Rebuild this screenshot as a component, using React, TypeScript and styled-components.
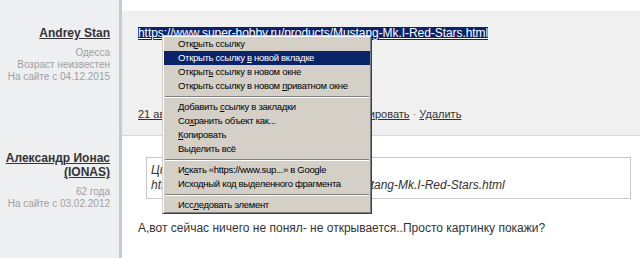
import React from "react";
import styled, { createGlobalStyle, css } from "styled-components";

const Global = createGlobalStyle`
  html, body { margin: 0; padding: 0; background: #fff; }
  body { font-family: "Liberation Sans", Arial, sans-serif; color: #333; }
`;

const Page = styled.div`
  position: relative;
  width: 640px;
  height: 258px;
  overflow: hidden;
`;

const Row = styled.div<{ $h?: number }>`
  display: grid;
  grid-template-columns: 119px 1fr;
  ${(p) => p.$h !== undefined && css`height: ${p.$h}px;`}
`;

const UserCell = styled.div`
  background: #edeff1;
  text-align: right;
  padding: 15px 9px 0 0;
`;

const ContentCell = styled.div<{ $grey?: boolean; $line?: boolean }>`
  border-left: 3px solid #c9cacc;
  background: ${(p) => (p.$grey ? "#f0f0f0" : "#fff")};
  ${(p) => p.$line && css`border-bottom: 1px solid #d6d6d6;`}
  padding: 0 9px 0 16px;
  display: flex;
  flex-direction: column;
`;

const UserName = styled.a`
  display: block;
  font-size: 12px;
  line-height: 14px;
  font-weight: bold;
  color: #333;
  text-decoration: underline;
  margin-bottom: 7px;
`;

const UserInfo = styled.div`
  font-size: 10px;
  line-height: 12px;
  color: #a0a0a0;
  white-space: nowrap;
`;

const SelectedLink = styled.a`
  align-self: flex-start;
  margin-top: 16px;
  font-size: 12px;
  line-height: 13px;
  letter-spacing: -0.06px;
  color: #fff;
  background: #0a246a;
  text-decoration: underline;
`;

const Meta = styled.div`
  margin-top: 67px;
  font-size: 11px;
  line-height: 14px;
  color: #888;
  height: 28px;
`;

const MetaLink = styled.a`
  color: #333;
  text-decoration: underline;
`;

const Quote = styled.div`
  margin: 21px 0 0 8px;
  border: 1px solid #c8c8c8;
  padding: 5px 4px 5px;
  font-size: 12px;
  line-height: 15px;
  font-style: italic;
  color: #333;
`;

const Text = styled.p`
  margin: 22px 0 0;
  font-size: 12px;
  line-height: 15px;
  color: #333;
`;

const Menu = styled.div`
  position: absolute;
  left: 162px;
  top: 35px;
  width: 206px;
  background: #d4d0c8;
  border: 1px solid;
  border-color: #d4d0c8 #404040 #404040 #d4d0c8;
  box-shadow: inset 1px 1px 0 #fff, inset -1px -1px 0 #808080;
  padding: 1px;
  font-family: "Liberation Sans", Arial, sans-serif;
  font-size: 9.5px;
  letter-spacing: -0.3px;
  color: #000;
`;

const MenuItem = styled.div<{ $active?: boolean }>`
  height: 14px;
  line-height: 14px;
  padding-left: 14px;
  white-space: nowrap;
  background: ${(p) => (p.$active ? "#0a246a" : "transparent")};
  color: ${(p) => (p.$active ? "#fff" : "#000")};
`;

const Separator = styled.div`
  height: 7px;
  display: flex;
  align-items: center;
  padding: 0 1px;
  &::after {
    content: "";
    flex: 1;
    height: 0;
    border-top: 1px solid #808080;
    border-bottom: 1px solid #fff;
  }
`;

export default function App() {
  return (
    <Page>
      <Global />
      <Row $h={11}>
        <UserCell />
        <ContentCell $line />
      </Row>
      <Row>
        <UserCell>
          <UserName>Andrey Stan</UserName>
          <UserInfo>Одесса</UserInfo>
          <UserInfo>Возраст неизвестен</UserInfo>
          <UserInfo>На сайте с 04.12.2015</UserInfo>
        </UserCell>
        <ContentCell $grey $line>
          <SelectedLink>https://www.super-hobby.ru/products/Mustang-Mk.I-Red-Stars.html</SelectedLink>
          <Meta>
            <MetaLink>21 августа 2016 г. в 14:35</MetaLink> · <MetaLink>Ответить</MetaLink> ·{" "}
            <MetaLink>Редактировать</MetaLink> · <MetaLink>Удалить</MetaLink>
          </Meta>
        </ContentCell>
      </Row>
      <Row $h={130}>
        <UserCell>
          <UserName>Александр Ионас (IONAS)</UserName>
          <UserInfo>62 года</UserInfo>
          <UserInfo>На сайте с 03.02.2012</UserInfo>
        </UserCell>
        <ContentCell>
          <Quote>
            Цитата (Andrey Stan):
            <br />
            https://www.super-hobby.ru/products/Mustang-Mk.I-Red-Stars.html
          </Quote>
          <Text>А,вот сейчас ничего не понял- не открывается..Просто картинку покажи?</Text>
        </ContentCell>
      </Row>
      <Menu>
        <MenuItem>Отк<u>р</u>ыть ссылку</MenuItem>
        <MenuItem $active>Открыть ссылку <u>в</u> новой вкладке</MenuItem>
        <MenuItem>Открыт<u>ь</u> ссылку в новом окне</MenuItem>
        <MenuItem>Открыть ссылку в новом <u>п</u>риватном окне</MenuItem>
        <Separator />
        <MenuItem>Добавить <u>с</u>сылку в закладки</MenuItem>
        <MenuItem>Со<u>х</u>ранить объект как...</MenuItem>
        <MenuItem><u>К</u>опировать</MenuItem>
        <MenuItem>Выделить всё</MenuItem>
        <Separator />
        <MenuItem>И<u>с</u>кать «https://www.sup...» в Google</MenuItem>
        <MenuItem>Исхо<u>д</u>ный код выделенного фрагмента</MenuItem>
        <Separator />
        <MenuItem>Исс<u>л</u>едовать элемент</MenuItem>
      </Menu>
    </Page>
  );
}
